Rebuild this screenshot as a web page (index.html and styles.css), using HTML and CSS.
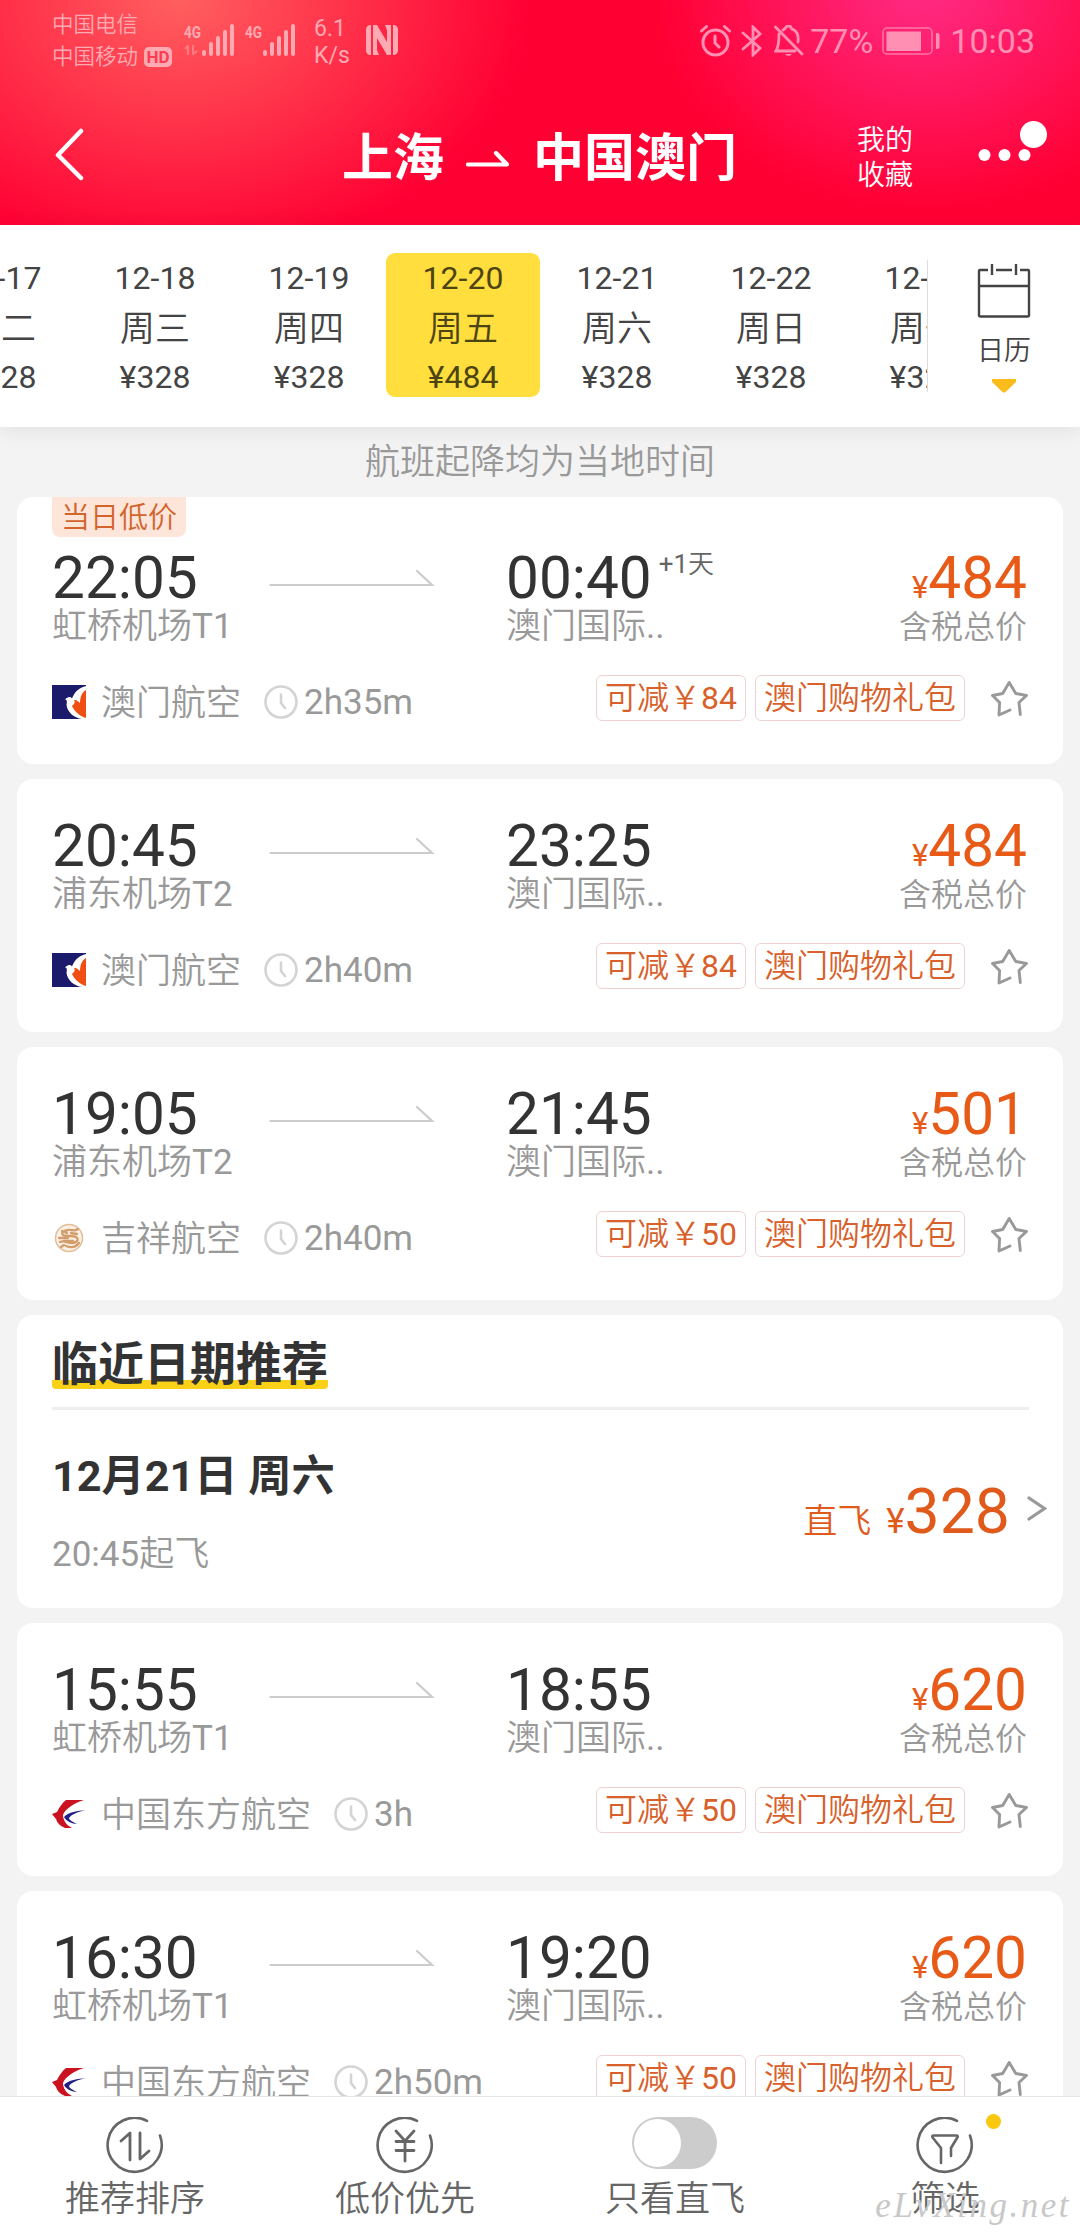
FILE: index.html
```html
<!DOCTYPE html>
<html lang="zh-CN">
<head>
    <meta charset="UTF-8">
    <title>上海 - 中国澳门</title>
    <link rel="stylesheet" href="styles.css">
</head>
<body>
<svg class="defs">
    <symbol id="arrow" viewBox="0 0 166 20"><path d="M1.5 16H163L148 2" fill="none" stroke="#ccc" stroke-width="2.2" stroke-linecap="round"/></symbol>
    <symbol id="clock" viewBox="0 0 34 34"><g fill="none" stroke="#d4d4d4" stroke-width="2.6" stroke-linecap="round"><circle cx="17" cy="17" r="15.5"/><path d="M17 9.500V18l4 5"/></g></symbol>
    <symbol id="star" viewBox="0 0 37 36"><path d="M19 29 8 34 8.600 21.500 1.500 14.500 11.700 12.500 18.200 1.500 24.800 12.500 35.500 14.500 28 21.500 29.300 33.500" fill="none" stroke="#999" stroke-width="2.900" stroke-linecap="round" stroke-linejoin="round"/></symbol>
    <symbol id="nx" viewBox="0 0 34 34">
        <path d="M0 0h34v34H0z" fill="#1b1a6b"/>
        <path d="M34 1C25 3 22 9 20 13.500 17.500 10.500 15 13 13 14.500c2 0 2.200 2 1.500 5C15 27 22 33 30 34h4z" fill="#fff"/>
        <path d="M34 5c-4 2-6 7-6 13-2-1-2-3-6-3 2 3-1 5-2 6 3 6 8 10 14 12z" fill="#f04e12"/>
    </symbol>
    <symbol id="ho" viewBox="0 0 34 34">
        <circle cx="17" cy="17" r="13.500" fill="#fbf0e6" stroke="#e3bd98" stroke-width="1.500"/>
        <path d="M26 8c-4 3-6 0-10 1-5 1-7 3-5 5 3 2 9 0 13 2 4 3 0 6-4 6-5 0-8-3-12-1M7 17h9m-2 8c5 2 10 1 13-3M10 10l5 2m4 0 6 1M9 26l3-2m9-4-9 0" fill="none" stroke="#d39d6c" stroke-width="2.300" stroke-linecap="round"/>
    </symbol>
    <symbol id="mu" viewBox="0 0 34 34">
        <path d="M32 3C22 6 13 12 11 18c0 5 3 10 9 13H13C8 29 5 26 4 22L0 17l5-2C7 11 10 6 14 3z" fill="#cb1220"/>
        <path d="M34 13c-8 1-18 2-22 7 2 4 8 7 13 7-4-2-8-4-8-6 3-4 9-6 17-8z" fill="#232083"/>
    </symbol>
    <symbol id="ring" viewBox="0 0 58 58"><path d="M41 3.800A27 27 0 1 0 54 18.500" fill="none" stroke="#666" stroke-width="2.600" stroke-linecap="round"/></symbol>
    <symbol id="signal" viewBox="0 0 32 32"><path d="M2 28v2M9 20v10M16 14v16M23 8v22M30 2v28" fill="none" stroke="currentColor" stroke-width="4" stroke-linecap="round"/></symbol>
</svg>
<div class="page">
    <div class="header">
        <div class="status">
            <div class="carrier">
                <div>中国电信</div>
                <div>中国移动<span class="hd">HD</span></div>
            </div>
            <div class="net net1">
                <div><b>4G</b><svg class="updown" width="14" height="10" viewBox="0 0 14 10"><path d="M1 4l3-3v9M9 0v9l4-3" fill="none" stroke="currentColor" stroke-width="2"/></svg></div>
                <svg width="32" height="32"><use href="#signal"/></svg>
            </div>
            <div class="net net2">
                <div><b>4G</b></div>
                <svg width="32" height="32"><use href="#signal"/></svg>
            </div>
            <div class="speed"><div>6.1</div><div>K/s</div></div>
            <svg class="nfc" width="32" height="32" viewBox="0 0 32 32"><path d="M5 1Q0 1 0 6v20q0 5 5 5zM27 1q5 0 5 5v20q0 5-5 5z" fill="currentColor"/><path d="M7 1h4l10 17V6l-2-5h6v30h-4L11 14v12l2 5H7z" fill="currentColor"/></svg>
            <div class="status-right">
                <svg width="31" height="32" viewBox="0 0 31 32"><g fill="none" stroke="currentColor" stroke-width="3" stroke-linecap="round"><circle cx="15.500" cy="17.500" r="12.500"/><path d="M15 11v7l4 4M1.500 6l5-4.500M29.500 6l-5-4.500"/></g></svg>
                <svg class="bt" width="22" height="32" viewBox="0 0 22 32"><path d="M2 8l17 15-7 7V2l7 7L2 24" fill="none" stroke="currentColor" stroke-width="2.800" stroke-linecap="round"/></svg>
                <svg width="30" height="32" viewBox="0 0 30 32"><path d="M9 5q2-1 4-4h3q1 3 4 4 5 3 4 12M5 9q0 12-3 17h19M1.500 2l26.500 27" fill="none" stroke="currentColor" stroke-width="2.800" stroke-linecap="round"/><path d="M11 29h7q-3.500 4-7 0z" fill="currentColor"/></svg>
                <span class="percent">77%</span>
                <svg class="battery" width="58" height="28" viewBox="0 0 58 28"><rect x="1" y="1" width="49" height="26" rx="4" fill="none" stroke="currentColor" stroke-width="1.500" opacity=".8"/><path d="M4.500 4.500h34.500v19.500H4.500zM54 6h1.500q2 0 2 2v12q0 2-2 2H54z" fill="currentColor"/></svg>
                <span>10:03</span>
            </div>
        </div>
        <div class="navbar">
            <svg class="back" width="32" height="54" viewBox="0 0 32 54"><path d="M28 3 5 27l23 23" fill="none" stroke="#fff" stroke-width="4.500" stroke-linecap="round" stroke-linejoin="round"/></svg>
            <div class="title">上海<svg width="44" height="18" viewBox="0 0 44 18"><path d="M2 14.500H41L30 3" fill="none" stroke="#fff" stroke-width="4.200" stroke-linecap="round" stroke-linejoin="round"/></svg>中国澳门</div>
            <div class="fav">我的<br>收藏</div>
            <svg class="more" width="70" height="54" viewBox="0 0 70 54"><g fill="#fff"><circle cx="6.500" cy="34" r="6"/><circle cx="26.500" cy="34" r="6"/><circle cx="46.500" cy="34" r="6"/><circle cx="55.500" cy="13.500" r="13.500"/></g></svg>
        </div>
    </div>

    <div class="dates">
        <div class="strip">
            <div class="day"><span>12-17</span><em>周二</em><span>¥328</span></div>
            <div class="day"><span>12-18</span><em>周三</em><span>¥328</span></div>
            <div class="day"><span>12-19</span><em>周四</em><span>¥328</span></div>
            <div class="day on"><span>12-20</span><em>周五</em><span>¥484</span></div>
            <div class="day"><span>12-21</span><em>周六</em><span>¥328</span></div>
            <div class="day"><span>12-22</span><em>周日</em><span>¥328</span></div>
            <div class="day"><span>12-23</span><em>周一</em><span>¥328</span></div>
        </div>
        <div class="calendar">
            <svg width="54" height="54" viewBox="0 0 54 54"><path d="M11 6H3q-1 0-1 1v44q0 1.500 1.500 1.500h47q1.500 0 1.500-1.500V7q0-1-1-1h-8M19 6h16M15 0v11M39 0v11M2 22h50" fill="none" stroke="#444" stroke-width="2.400"/></svg>
            <span>日历</span>
            <svg width="24" height="15" viewBox="0 0 24 15"><path d="M0 1h24v3L13 14.500h-2L0 4z" fill="#fabb1c"/></svg>
        </div>
    </div>

    <div class="list">
        <div class="notice">航班起降均为当地时间</div>

        <div class="card first">
            <div class="badge">当日低价</div>
            <div class="route">
                <div class="dep"><div class="time">22:05</div><div class="port">虹桥机场T1</div></div>
                <svg class="arrow" width="166" height="20"><use href="#arrow"/></svg>
                <div class="arr"><div class="time">00:40<span class="plus">+1天</span></div><div class="port">澳门国际..</div></div>
                <div class="price"><div class="num"><i>¥</i>484</div><div class="tax">含税总价</div></div>
            </div>
            <div class="info">
                <svg class="logo" width="34" height="34"><use href="#nx"/></svg><span class="airline">澳门航空</span>
                <svg class="clock" width="34" height="34"><use href="#clock"/></svg><span>2h35m</span>
                <div class="tags"><span>可减￥84</span><span>澳门购物礼包</span></div>
                <svg class="star" width="37" height="36"><use href="#star"/></svg>
            </div>
        </div>

        <div class="card">
            <div class="route">
                <div class="dep"><div class="time">20:45</div><div class="port">浦东机场T2</div></div>
                <svg class="arrow" width="166" height="20"><use href="#arrow"/></svg>
                <div class="arr"><div class="time">23:25</div><div class="port">澳门国际..</div></div>
                <div class="price"><div class="num"><i>¥</i>484</div><div class="tax">含税总价</div></div>
            </div>
            <div class="info">
                <svg class="logo" width="34" height="34"><use href="#nx"/></svg><span class="airline">澳门航空</span>
                <svg class="clock" width="34" height="34"><use href="#clock"/></svg><span>2h40m</span>
                <div class="tags"><span>可减￥84</span><span>澳门购物礼包</span></div>
                <svg class="star" width="37" height="36"><use href="#star"/></svg>
            </div>
        </div>

        <div class="card">
            <div class="route">
                <div class="dep"><div class="time">19:05</div><div class="port">浦东机场T2</div></div>
                <svg class="arrow" width="166" height="20"><use href="#arrow"/></svg>
                <div class="arr"><div class="time">21:45</div><div class="port">澳门国际..</div></div>
                <div class="price"><div class="num"><i>¥</i>501</div><div class="tax">含税总价</div></div>
            </div>
            <div class="info">
                <svg class="logo" width="34" height="34"><use href="#ho"/></svg><span class="airline">吉祥航空</span>
                <svg class="clock" width="34" height="34"><use href="#clock"/></svg><span>2h40m</span>
                <div class="tags"><span>可减￥50</span><span>澳门购物礼包</span></div>
                <svg class="star" width="37" height="36"><use href="#star"/></svg>
            </div>
        </div>

        <div class="card near">
            <h2><span>临近日期推荐</span></h2>
            <div class="near-row">
                <div class="near-date"><b>12月21日 周六</b><span>20:45起飞</span></div>
                <div class="near-price">直飞<i>¥</i><strong>328</strong></div>
                <svg width="20" height="25" viewBox="0 0 20 25"><path d="M2 2l15.500 10.500L2 23" fill="none" stroke="#999" stroke-width="3.200" stroke-linecap="round"/></svg>
            </div>
        </div>

        <div class="card">
            <div class="route">
                <div class="dep"><div class="time">15:55</div><div class="port">虹桥机场T1</div></div>
                <svg class="arrow" width="166" height="20"><use href="#arrow"/></svg>
                <div class="arr"><div class="time">18:55</div><div class="port">澳门国际..</div></div>
                <div class="price"><div class="num"><i>¥</i>620</div><div class="tax">含税总价</div></div>
            </div>
            <div class="info">
                <svg class="logo" width="34" height="34"><use href="#mu"/></svg><span class="airline">中国东方航空</span>
                <svg class="clock" width="34" height="34"><use href="#clock"/></svg><span>3h</span>
                <div class="tags"><span>可减￥50</span><span>澳门购物礼包</span></div>
                <svg class="star" width="37" height="36"><use href="#star"/></svg>
            </div>
        </div>

        <div class="card">
            <div class="route">
                <div class="dep"><div class="time">16:30</div><div class="port">虹桥机场T1</div></div>
                <svg class="arrow" width="166" height="20"><use href="#arrow"/></svg>
                <div class="arr"><div class="time">19:20</div><div class="port">澳门国际..</div></div>
                <div class="price"><div class="num"><i>¥</i>620</div><div class="tax">含税总价</div></div>
            </div>
            <div class="info">
                <svg class="logo" width="34" height="34"><use href="#mu"/></svg><span class="airline">中国东方航空</span>
                <svg class="clock" width="34" height="34"><use href="#clock"/></svg><span>2h50m</span>
                <div class="tags"><span>可减￥50</span><span>澳门购物礼包</span></div>
                <svg class="star" width="37" height="36"><use href="#star"/></svg>
            </div>
        </div>
    </div>

    <div class="tabbar">
        <div class="tab">
            <svg width="58" height="58" viewBox="0 0 58 58"><use href="#ring"/><path d="M15 24l9-8v27M34 16v26l9-8" fill="none" stroke="#666" stroke-width="2.800" stroke-linecap="round" stroke-linejoin="round"/></svg>
            <span>推荐排序</span>
        </div>
        <div class="tab">
            <svg width="58" height="58" viewBox="0 0 58 58"><use href="#ring"/><path d="M20 14l9 10 9-10M29 24v20M20 24.500h18M20 33.500h18" fill="none" stroke="#666" stroke-width="2.800" stroke-linecap="round"/></svg>
            <span>低价优先</span>
        </div>
        <div class="tab">
            <div class="switch"><i></i></div>
            <span>只看直飞</span>
        </div>
        <div class="tab">
            <svg width="58" height="58" viewBox="0 0 58 58"><use href="#ring"/><path d="M25 46V31L17 21q-2-2.500 1-2.500h22q3 0 1 2.500L35 31v8" fill="none" stroke="#666" stroke-width="2.600" stroke-linecap="round" stroke-linejoin="round"/></svg>
            <span>筛选</span>
            <i class="dot"></i>
        </div>
        <div class="watermark">eLvXing.net</div>
    </div>
</div>
</body>
</html>
```
FILE: styles.css
```css
body{ margin:0; font-family:Roboto,"Noto Sans CJK SC DemiLight","Noto Sans CJK SC Light","Noto Sans CJK SC",sans-serif; color:#333; background:#f3f3f3; }
svg{ display:block; flex:none; }
i,em{ font-style:normal; }
.defs{ position:absolute; width:0; height:0; }
.page{ width:1080px; height:2240px; display:flex; flex-direction:column; overflow:hidden; }

/* header */
.header{ height:225px; flex:none; background:radial-gradient(ellipse 350px 260px at 180px 0,#ff5f5f,rgba(255,0,51,0)),radial-gradient(ellipse 270px 220px at 925px -10px,#ff2b85,rgba(255,0,51,0)),#ff0033; color:#fff; }
.status{ height:80px; display:flex; align-items:flex-start; color:#ffa9b2; padding-left:52px; }
.carrier{ width:132px; padding-top:9px; font-size:21.500px; line-height:32px; white-space:nowrap; }
.carrier div{ display:flex; align-items:center; }
.hd{ margin-left:6px; width:28px; height:20px; border-radius:5px; background:#ffa9b2; color:#ff3d52; font-size:17px; line-height:21px; font-weight:bold; text-align:center; }
.net{ display:flex; padding-top:24px; }
.net b{ display:block; font-size:17px; line-height:16px; transform:scaleX(.8); transform-origin:left; }
.net div{ width:18px; }
.net1{ width:61px; }
.net2{ width:69px; }
.updown{ margin-top:5px; opacity:.5; }
.speed{ width:52px; padding-top:15px; font-size:23px; line-height:27px; }
.nfc{ margin-top:24px; }
.status-right{ margin-left:auto; padding:25px 45px 0 0; display:flex; align-items:center; height:32px; font-size:34px; color:#ff8fb3; }
.bt{ margin:0 11px 0 10px; }
.percent{ margin:0 9px 0 6px; }
.battery{ margin-right:10px; }
.navbar{ height:145px; display:flex; align-items:flex-start; }
.back{ margin:48px 0 0 53px; }
.title{ margin:41px 0 0 257px; display:flex; align-items:center; font-size:51px; line-height:75px; font-weight:bold; font-family:Roboto,"Noto Sans CJK SC",sans-serif; }
.title svg{ margin:0 23px 0 22px; }
.fav{ margin:44px 0 0 120px; font-size:28px; line-height:34.500px; }
.more{ margin:41px 0 0 65px; }

/* dates */
.dates{ height:202px; flex:none; display:flex; background:#fff; box-shadow:0 3px 20px rgba(0,0,0,.08); position:relative; }
.strip{ width:927px; margin:28px 0; display:flex; overflow:hidden; }
.day{ width:154px; height:143px; padding-top:1px; flex:none; border-radius:9px; display:flex; flex-direction:column; align-items:center; font-size:32px; color:#444; }
.day:first-child{ margin-left:-76px; }
.day span{ line-height:48px; }
.day em{ font-size:35px; line-height:46px; padding-top:5px; }
.day.on{ background:#ffde3e; color:#4d4413; }
.calendar{ flex:1; height:132px; margin-top:35px; border-left:1px solid #ddd; display:flex; flex-direction:column; align-items:center; font-size:27px; color:#444; }
.calendar svg:first-child{ margin-top:4px; }
.calendar span{ line-height:36px; margin:15px 0 9px; }

/* list */
.list{ flex:1; min-height:0; overflow:hidden; padding:0 17px; }
.notice{ height:70px; line-height:71px; text-align:center; font-size:35px; color:#999; }
.card{ height:253px; margin-bottom:15px; background:#fff; border-radius:16px; padding:0 34px 0 35px; box-sizing:border-box; overflow:hidden; }
.card.first{ height:267px; }
.badge{ width:134px; height:40px; line-height:42px; margin-bottom:-26px; text-align:center; font-size:29px; color:#d2642c; background:#fde5da; border-radius:0 0 8px 8px; }
.route{ height:163px; box-sizing:border-box; padding-top:38px; display:flex; }
.dep{ width:217px; }
.time{ font-size:58.500px; line-height:59px; height:59px; white-space:nowrap; display:flex; }
.plus{ font-size:26px; line-height:30px; color:#666; margin-left:7px; }
.port{ font-size:35px; line-height:38px; color:#999; white-space:nowrap; }
.arrow{ margin:20px 71px 0 0; }
.price{ margin:0 2px 0 auto; text-align:right; color:#e85a17; }
.num{ font-size:58.500px; line-height:59px; height:59px; white-space:nowrap; }
.num i{ font-size:31px; }
.tax{ font-size:32px; line-height:38px; color:#999; }
.info{ height:56px; display:flex; align-items:center; font-size:35px; color:#999; }
.airline{ margin:-6px 23px 0 15px; }
.clock{ margin-right:6px; }
.tags{ margin:-8px 26px 0 auto; display:flex; gap:9px; }
.tags span{ height:44px; line-height:44px; padding:0 8px; font-size:32px; color:#d8602a; border:1px solid #f0d2d2; border-radius:6px; }
.star{ margin:-7px 1px 0 0; }

/* nearby dates */
.card.near{ height:293px; }
.near h2{ margin:0; height:92px; border-bottom:3px solid #eee; font-size:46px; line-height:96px; font-family:Roboto,"Noto Sans CJK SC",sans-serif; }
.near h2 span{ background:linear-gradient(#fad117,#fad117) 0 100%/100% 9px no-repeat; display:inline-block; height:52px; line-height:54px; vertical-align:top; margin-top:22px; border-radius:4px; }
.near-row{ height:198px; display:flex; align-items:flex-start; }
.near-date b{ display:block; font-size:43.200px; line-height:60px; margin-top:37px; font-family:Roboto,"Noto Sans CJK SC",sans-serif; }
.near-date span{ display:block; font-size:35px; line-height:50px; margin-top:23px; color:#999; }
.near-price{ margin-left:auto; margin-top:62px; font-size:34px; line-height:80px; color:#e05a1c; }
.near-price i{ font-size:35px; margin-left:15px; }
.near-price strong{ font-size:62.500px; font-weight:normal; }
.near svg{ margin:86px -18px 0 17px; }

/* tab bar */
.tabbar{ height:144px; flex:none; box-sizing:border-box; display:flex; background:#fff; border-top:1px solid #e4e4e4; position:relative; }
.tab{ flex:1; display:flex; flex-direction:column; align-items:center; padding-top:20px; position:relative; color:#666; font-size:35px; }
.tab span{ line-height:48px; margin-top:1px; }
.switch{ width:85px; height:52px; border-radius:26px; background:#ccc; margin:0 1px 6px 0; }
.switch i{ display:block; width:47px; height:48px; margin:2px; border-radius:50%; background:#fff; float:left; }
.dot{ position:absolute; left:176px; top:17px; width:15px; height:15px; border-radius:50%; background:#fac80f; }
.watermark{ position:absolute; right:9px; bottom:14px; font-family:"Liberation Serif",serif; font-style:italic; font-size:35px; letter-spacing:2.500px; color:#c8c8c8; }
```
